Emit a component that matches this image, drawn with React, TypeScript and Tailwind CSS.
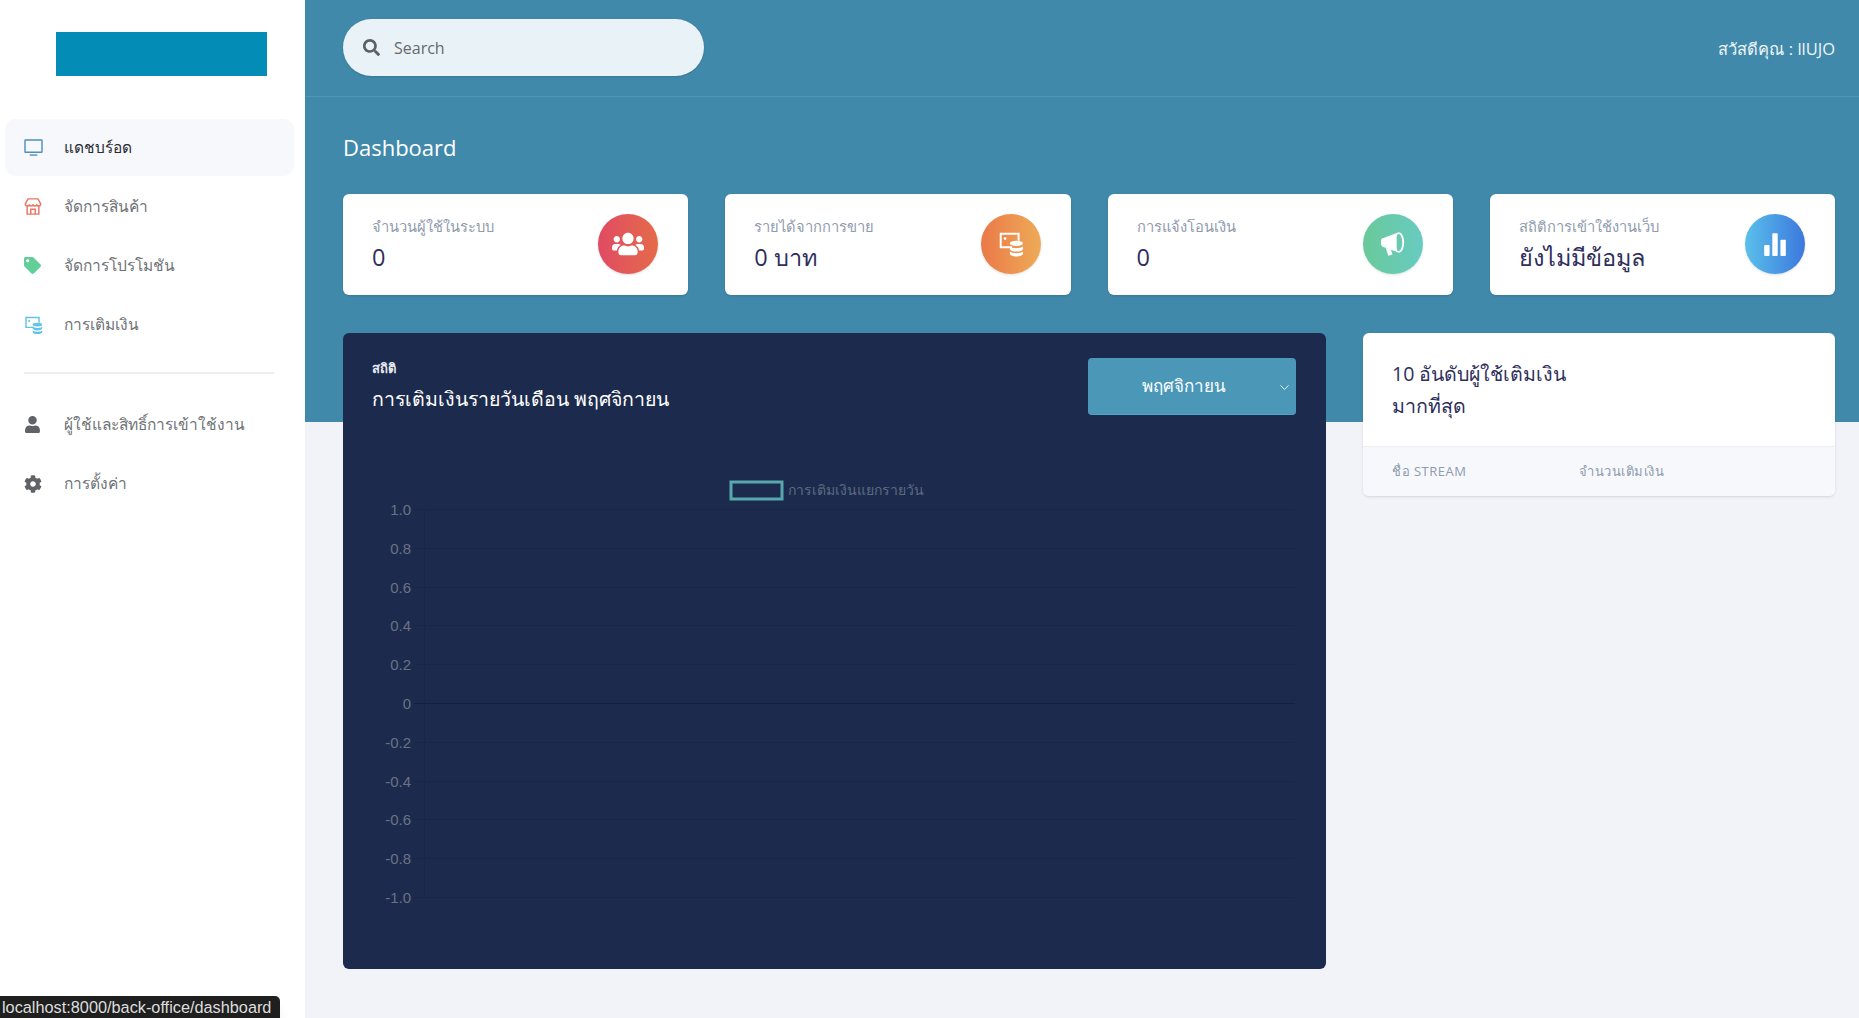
import React from 'react';
import { FaUsers, FaTag, FaUser, FaCog, FaSearch } from 'react-icons/fa';
import { ChevronDown } from 'lucide-react';

type IconProps = { className?: string };

const ScreenCoins: React.FC<IconProps> = ({ className = '' }) => (
  <svg viewBox="0 0 24 24" className={className} fill="none">
    <path d="M13 15H2.5V2.5H19V9" stroke="currentColor" strokeWidth="1.8" />
    <circle cx="6.5" cy="7" r="1.3" fill="currentColor" />
    <ellipse cx="17" cy="11.5" rx="6" ry="2.4" fill="currentColor" />
    <path d="M11 14.2c1.2 1 3.2 1.5 6 1.5s4.800-.5 6-1.500v2.300c0 1.300-2.700 2.400-6 2.400s-6-1.100-6-2.400z" fill="currentColor" />
    <path d="M11 19c1.200 1 3.200 1.500 6 1.500s4.800-.5 6-1.500v2.100c0 1.300-2.700 2.400-6 2.400s-6-1.100-6-2.400z" fill="currentColor" />
  </svg>
);

const Tv: React.FC<IconProps> = ({ className = '' }) => (
  <svg viewBox="0 0 20 18" className={className} fill="none" stroke="currentColor">
    <rect x="1" y="1" width="18" height="13" strokeWidth="1.5" rx="0.5" />
    <path d="M6 17h8" strokeWidth="1.500" />
  </svg>
);

const Shop: React.FC<IconProps> = ({ className = '' }) => (
  <svg viewBox="0 0 20 20" className={className} fill="none" stroke="currentColor" strokeWidth="1.6">
    <path d="M4.500 1.500h11L18.500 7c0 1.500-1.200 2.500-2.400 2.500S14 8.500 14 7.500c0 1-1 2-2 2s-2-1-2-2c0 1-1 2-2 2s-2-1-2-2c0 1-.9 2-2.100 2S1.500 8.500 1.500 7z" />
    <path d="M3.500 9.500v9h13v-9M7.500 18.500v-5.500h5v5.500" />
  </svg>
);

const Bars: React.FC<IconProps> = ({ className = '' }) => (
  <svg viewBox="0 0 24 24" className={className} fill="currentColor">
    <rect x="2" y="13" width="5" height="10" rx="0.8" />
    <rect x="9.500" y="2" width="5" height="21" rx="0.8" />
    <rect x="17" y="8" width="5" height="15" rx="0.8" />
  </svg>
);

const Megaphone: React.FC<IconProps> = ({ className = '' }) => (
  <svg viewBox="0 0 24 24" className={className}>
    <path d="M1 9.500C1 7.500 2.500 6.500 4 6.500L16 2v18L4 15.500C2.500 15.500 1 14.500 1 12.500z" fill="currentColor" />
    <path d="M5.500 16l5 1.800 1.500 4.700-4 1.200z" fill="currentColor" />
    <ellipse cx="18" cy="11" rx="4.300" ry="9" fill="none" stroke="currentColor" strokeWidth="1.800" />
  </svg>
);

const menuTop = [
  { label: 'แดชบร์อด', icon: <Tv className="w-[19px] h-[17px] text-[#4b8fc0]" />, active: true },
  { label: 'จัดการสินค้า', icon: <Shop className="w-[18px] h-[19px] text-[#ea7560]" /> },
  { label: 'จัดการโปรโมชัน', icon: <FaTag className="w-[17px] h-[17px] text-[#62cf98]" /> },
  { label: 'การเติมเงิน', icon: <ScreenCoins className="w-[19px] h-[20px] text-[#62c3e8]" /> },
];

const menuBottom = [
  { label: 'ผู้ใช้และสิทธิ์การเข้าใช้งาน', icon: <FaUser className="w-[17px] h-[17px] text-[#5f6368]" /> },
  { label: 'การตั้งค่า', icon: <FaCog className="w-[18px] h-[18px] text-[#5f6368]" /> },
];

const stats = [
  { label: 'จำนวนผู้ใช้ในระบบ', value: '0', icon: <FaUsers className="w-[32px] h-[26px]" />, grad: 'from-[#e04a62] to-[#e56a49]' },
  { label: 'รายได้จากการขาย', value: '0 บาท', icon: <ScreenCoins className="w-[26px] h-[28px]" />, grad: 'from-[#ea7848] to-[#edab58]' },
  { label: 'การแจ้งโอนเงิน', value: '0', icon: <Megaphone className="w-[25px] h-[25px]" />, grad: 'from-[#69c99a] to-[#68cbc1]' },
  { label: 'สถิติการเข้าใช้งานเว็บ', value: 'ยังไม่มีข้อมูล', icon: <Bars className="w-[26px] h-[26px]" />, grad: 'from-[#5cc0ea] to-[#3d77dd]' },
];

const ticks = ['1.0', '0.8', '0.6', '0.4', '0.2', '0', '-0.2', '-0.4', '-0.6', '-0.8', '-1.0'];

const NavItem: React.FC<{ label: string; icon: React.ReactNode; active?: boolean }> = ({ label, icon, active }) => (
  <div className={`ml-[5px] mr-[11px] h-[57px] mb-[2px] flex items-center rounded-[10px] text-[15.5px] ${active ? 'bg-[#f6f8fc] text-[#2b2b33]' : 'text-[#6f7378]'}`}>
    <span className="w-[59px] pl-[19px] flex items-center">{icon}</span>
    <span>{label}</span>
  </div>
);

const RevenueChart: React.FC = () => (
  <svg width="982" height="470" className="block mt-[65px]">
    <rect x="388" y="2" width="51" height="17" fill="none" stroke="#57a7ad" strokeWidth="3" />
    <text x="445" y="15" fontSize="14" fill="#5d6a80" fontFamily="'Open Sans', sans-serif">การเติมเงินแยกรายวัน</text>
    <line x1="81.500" y1="29" x2="81.500" y2="418" stroke="#18264a" />
    {ticks.map((t, i) => {
      const y = Math.round(29 + i * 38.8) + 0.5;
      return (
        <g key={t}>
          <line x1="71" y1={y} x2="952" y2={y} stroke={t === '0' ? '#141f3e' : '#18264a'} />
          <text x="68" y={y + 5} textAnchor="end" fontSize="15" fill="#6a7284" fontFamily="'Liberation Sans', sans-serif">{t}</text>
        </g>
      );
    })}
  </svg>
);

export default function App() {
  return (
    <div className="relative flex h-screen overflow-hidden bg-white font-['Open_Sans','Noto_Sans',sans-serif]">
      <aside className="w-[305px] shrink-0">
        <div className="h-[119px] pt-[32px] pl-[56px]">
          <div className="w-[211px] h-[44px] bg-[#038cb5]" />
        </div>
        {menuTop.map((m) => (
          <NavItem key={m.label} {...m} />
        ))}
        <div className="mx-[24px] mt-[19px] mb-[22px] h-[2px] w-[250px] bg-[#eceef1]" />
        {menuBottom.map((m) => (
          <NavItem key={m.label} {...m} />
        ))}
      </aside>

      <main className="flex-1 bg-[linear-gradient(#4189ab_0,#4189ab_422px,#f1f3f9_422px)]">
        <header className="h-[97px] pl-[38px] pr-[24px] pb-[2px] flex items-center justify-between border-b border-white/10">
          <div className="w-[361px] h-[57px] rounded-full bg-[#e9f2f7] flex items-center pl-[20px] gap-[14px] text-[#666a6e] shadow-sm">
            <FaSearch className="w-[17px] h-[17px] text-[#5c6063]" />
            <span className="text-[16px] pt-[2px]">Search</span>
          </div>
          <div className="text-[16.500px] pt-[5px] text-[#eef5f8]">สวัสดีคุณ : llUJO</div>
        </header>

        <div className="pl-[38px] pr-[24px]">
          <h1 className="text-[22px] leading-[32px] mt-[34px] text-white">Dashboard</h1>

          <div className="grid grid-cols-4 gap-[37px] mt-[31px]">
            {stats.map((s) => (
              <div key={s.label} className="h-[101px] bg-white rounded-[6px] shadow-sm pl-[30px] pr-[30px] flex items-center justify-between">
                <div className="-ml-[1px]">
                  <div className="text-[14.700px] leading-[24px] -mt-[1px] text-[#8f9bae]">{s.label}</div>
                  <div className="text-[23.500px] leading-[34px] pt-[2px] text-[#2f2f5c]">{s.value}</div>
                </div>
                <div className={`w-[60px] h-[60px] mb-[2px] rounded-full bg-gradient-to-r ${s.grad} text-white flex items-center justify-center shadow-sm`}>
                  {s.icon}
                </div>
              </div>
            ))}
          </div>

          <div className="grid grid-cols-[983px_472px] gap-[37px] mt-[38px]">
            <section className="h-[636px] bg-[#1c2b4d] rounded-[6px]">
              <div className="pl-[29px] pr-[30px] pt-[25px] flex justify-between">
                <div>
                  <div className="text-[13px] leading-[20px] font-semibold text-[#e6e9ef]">สถิติ</div>
                  <div className="text-[19.500px] leading-[32px] mt-[5px] font-medium text-white">การเติมเงินรายวันเดือน พฤศจิกายน</div>
                </div>
                <div className="w-[208px] h-[57px] rounded-[4px] bg-[#4a97b8] border-b border-[#4fa3c6] text-white font-medium text-[17px] flex items-center justify-center relative">
                  <span className="-ml-[17px]">พฤศจิกายน</span>
                  <ChevronDown className="absolute right-[4px] top-[22px] w-[15px] h-[15px]" strokeWidth={1.4} />
                </div>
              </div>
              <RevenueChart />
            </section>

            <section className="self-start bg-white rounded-[6px] shadow-sm overflow-hidden">
              <div className="h-[114px] pt-[25px] pl-[29px] border-b border-[#eceef3] text-[19.600px] leading-[32px] text-[#2f2f5c]">
                10 อันดับผู้ใช้เติมเงิน<br />มากที่สุด
              </div>
              <div className="h-[49px] bg-[#f6f8fc] pl-[29px] pt-[1px] flex items-center text-[13px] tracking-[0.04em] text-[#8f9bae]">
                <span className="w-[187px]">ชื่อ STREAM</span>
                <span>จำนวนเติมเงิน</span>
              </div>
            </section>
          </div>
        </div>
      </main>

      <div className="absolute left-0 bottom-0 w-[280px] h-[22px] bg-[#1f1f1f] rounded-tr-[5px] pl-[2px] text-[16.300px] leading-[22px] text-[#dedede] whitespace-nowrap font-['Liberation_Sans',sans-serif] shadow-lg">
        localhost:8000/back-office/dashboard
      </div>
    </div>
  );
}
